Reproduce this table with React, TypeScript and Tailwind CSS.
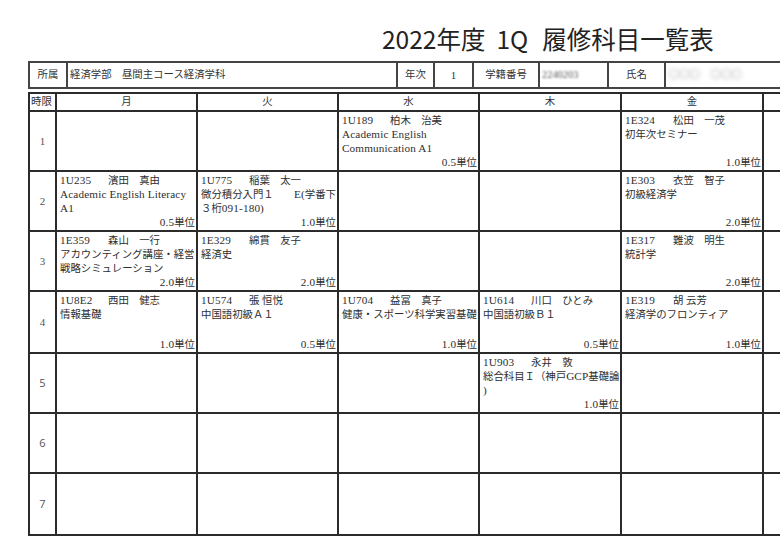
import type { ReactNode } from "react";

type Line = string | [string, string];

interface Course {
  code: string;
  teacher: string;
  lines: Line[];
  credit: string;
}

const days = ["月", "火", "水", "木", "金", "土"];

// timetable[period][day]
const timetable: (Course | null)[][] = [
  [
    null,
    null,
    { code: "1U189", teacher: "柏木\u3000治美", lines: ["Academic English", "Communication A1"], credit: "0.5単位" },
    null,
    { code: "1E324", teacher: "松田\u3000一茂", lines: ["初年次セミナー"], credit: "1.0単位" },
    null,
  ],
  [
    { code: "1U235", teacher: "濱田\u3000真由", lines: ["Academic English Literacy", "A1"], credit: "0.5単位" },
    { code: "1U775", teacher: "稲葉\u3000太一", lines: [["微分積分入門１", "E(学番下"], "３桁091-180)"], credit: "1.0単位" },
    null,
    null,
    { code: "1E303", teacher: "衣笠\u3000智子", lines: ["初級経済学"], credit: "2.0単位" },
    null,
  ],
  [
    { code: "1E359", teacher: "森山\u3000一行", lines: ["アカウンティング講座・経営", "戦略シミュレーション"], credit: "2.0単位" },
    { code: "1E329", teacher: "綿貫\u3000友子", lines: ["経済史"], credit: "2.0単位" },
    null,
    null,
    { code: "1E317", teacher: "難波\u3000明生", lines: ["統計学"], credit: "2.0単位" },
    null,
  ],
  [
    { code: "1U8E2", teacher: "西田\u3000健志", lines: ["情報基礎"], credit: "1.0単位" },
    { code: "1U574", teacher: "張 恒悦", lines: ["中国語初級Ａ１"], credit: "0.5単位" },
    { code: "1U704", teacher: "益冨\u3000真子", lines: ["健康・スポーツ科学実習基礎"], credit: "1.0単位" },
    { code: "1U614", teacher: "川口\u3000ひとみ", lines: ["中国語初級Ｂ１"], credit: "0.5単位" },
    { code: "1E319", teacher: "胡 云芳", lines: ["経済学のフロンティア"], credit: "1.0単位" },
    null,
  ],
  [
    null,
    null,
    null,
    { code: "1U903", teacher: "永井\u3000敦", lines: ["総合科目Ｉ（神戸GCP基礎論", ")"], credit: "1.0単位" },
    null,
    null,
  ],
  [null, null, null, null, null, null],
  [null, null, null, null, null, null],
];

const mincho = "font-['Liberation_Serif','Noto_Sans_CJK_JP',serif]";

// half-width latin runs are set a bit larger, like the mincho half-width glyphs
function Txt({ s }: { s: string }) {
  const parts = s.split(/([\x21-\x7e][\x20-\x7e]*)/);
  const out: ReactNode[] = parts.map((p, i) =>
    /^[\x21-\x7e]/.test(p) ? (
      <span key={i} className="text-[11.2px] leading-none tracking-[0.15px]">
        {p}
      </span>
    ) : (
      p
    )
  );
  return <>{out}</>;
}

function CourseCell({ course }: { course: Course | null }) {
  if (!course) return <div className="bg-white" />;
  return (
    <div className={`flex flex-col overflow-hidden bg-white pl-[3px] pr-px pt-[2px] text-[10.4px] leading-[14px] text-[#2e2e2e] ${mincho}`}>
      <div className="flex h-[14px] whitespace-nowrap">
        <span className="w-[48px] shrink-0">
          <Txt s={course.code} />
        </span>
        <span>
          <Txt s={course.teacher} />
        </span>
      </div>
      {course.lines.map((line, i) =>
        typeof line === "string" ? (
          <div key={i} className="h-[14px] whitespace-pre">
            <Txt s={line} />
          </div>
        ) : (
          <div key={i} className="flex h-[14px] justify-between whitespace-nowrap">
            <span>
              <Txt s={line[0]} />
            </span>
            <span>
              <Txt s={line[1]} />
            </span>
          </div>
        )
      )}
      <div className="mt-auto h-[14px] text-right">
        <Txt s={course.credit} />
      </div>
    </div>
  );
}

export default function App() {
  return (
    <div className="h-[542px] w-[780px] overflow-hidden bg-white">
      {/* title */}
      <div className="h-[61px] pl-[382px] pt-[22px]">
        <h1 className="flex whitespace-nowrap font-['Noto_Sans_CJK_JP',sans-serif] text-[24.5px] leading-[34px] text-[#222]">
          <span>2022年度</span>
          <span className="ml-[11px]">1Q</span>
          <span className="ml-[14px]">履修科目一覧表</span>
        </h1>
      </div>

      {/* info row */}
      <div
        className={`ml-[28px] grid w-[900px] grid-cols-[36px_328px_35px_37px_64px_67px_55px_200px] grid-rows-[24px] gap-[2px] bg-[#444] p-[2px] text-[10.4px] leading-[24px] text-[#333] ${mincho}`}
      >
        <div className="bg-white text-center">所属</div>
        <div className="bg-white pl-[2px]">経済学部{"\u3000"}昼間主コース経済学科</div>
        <div className="bg-white text-center">年次</div>
        <div className="bg-white text-center text-[11px]">1</div>
        <div className="bg-white text-center">学籍番号</div>
        <div className="overflow-hidden bg-white pl-[2px]">
          <span className="inline-block text-[#555] blur-[1.2px]">2240203</span>
        </div>
        <div className="bg-white text-center">氏名</div>
        <div className="overflow-hidden bg-white pl-[3px]">
          <span className="inline-block text-[#aaa] blur-[2px]">〇〇〇{"\u3000"}〇〇〇</span>
        </div>
      </div>

      {/* timetable */}
      <div
        className={`ml-[28px] mt-[3px] grid w-[900px] grid-cols-[25px_139px_139px_139px_140px_140px_140px] grid-rows-[16px_58px_58px_58px_60px_58px_58px_60px] gap-[2px] bg-[#2b2b2b] p-[2px] text-[10.4px] text-[#333] ${mincho}`}
      >
        <div className="bg-white pl-px leading-[16px]">時限</div>
        {days.map((d) => (
          <div key={d} className="bg-white text-center leading-[16px]">
            {d === "土" ? "" : d}
          </div>
        ))}

        {timetable.map((row, p) => [
          <div
            key={`p${p}`}
            className={`flex items-center justify-center bg-white text-[11px] text-[#555] ${
              p < 4 ? "font-['Liberation_Serif',serif]" : "font-['Open_Sans',sans-serif]"
            }`}
          >
            {p + 1}
          </div>,
          ...row.map((c, d) => <CourseCell key={`c${p}-${d}`} course={c} />),
        ])}
      </div>
    </div>
  );
}
